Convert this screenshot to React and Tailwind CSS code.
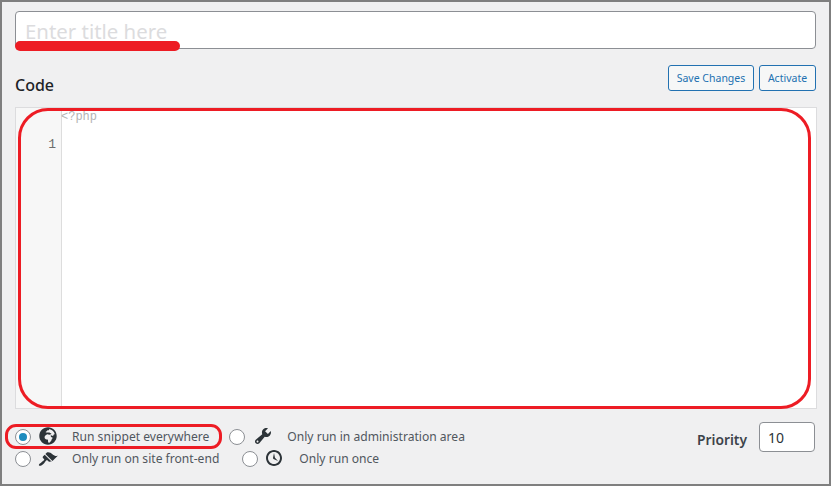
import React from 'react';
import { FaGlobeAfrica } from 'react-icons/fa';

const Radio = ({ checked }) => (
    <span className="w-4 h-4 rounded-full border border-[#8c8f94] bg-white flex items-center justify-center shrink-0">
        {checked && <span className="w-2 h-2 rounded-full bg-[#1e8cbe]" />}
    </span>
);

const WrenchIcon = () => (
    <svg viewBox="0 0 20 20" className="w-5 h-5 -mt-0.5 text-[#2c3338]" fill="currentColor">
        <path d="M16.68 9.77c-1.34 1.34-3.3 1.67-4.95.99l-5.41 6.52c-.99.99-2.59.99-3.58 0s-.99-2.59 0-3.57l6.52-5.42c-.68-1.65-.35-3.61.99-4.95 1.28-1.28 3.12-1.62 4.72-1.06l-2.89 2.89 2.82 2.82 2.86-2.87c.53 1.58.18 3.39-1.08 4.65zM3.81 16.21c.4.39 1.04.39 1.43 0 .4-.4.4-1.04 0-1.43-.39-.4-1.03-.4-1.43 0-.39.39-.39 1.03 0 1.43z" />
    </svg>
);

const BrushIcon = () => (
    <svg viewBox="0 0 20 20" className="w-5 h-5 -mt-0.5 text-[#2c3338]" fill="currentColor">
        <path d="M14.48 11.06L7.41 3.99l1.5-1.5c.5-.56 2.3-.47 3.51.32 1.21.8 1.43 1.28 2.91 2.1 1.18.64 2.45 1.26 4.45.85zm-.71.71L6.7 4.7 4.93 6.47c-.39.39-.39 1.02 0 1.41l1.06 1.06c.39.39.39 1.03 0 1.42-.6.6-1.43 1.11-2.21 1.69-.35.26-.7.53-1.01.84C1.43 13.23.4 14.89 1.02 15.5c.17.17.44.28.72.29 1.2.04 2.8-.93 3.92-2.07.31-.31.58-.66.84-1.01.58-.78 1.09-1.61 1.69-2.21.39-.39 1.03-.39 1.42 0l1.06 1.06c.39.39 1.02.39 1.41 0z" transform="translate(0 2)" />
    </svg>
);

const ClockIcon = () => (
    <svg viewBox="0 0 20 20" className="w-5 h-5 -mt-0.5 text-[#2c3338]" fill="currentColor">
        <path d="M10 2c4.42 0 8 3.58 8 8s-3.58 8-8 8-8-3.58-8-8 3.58-8 8-8zm0 14c3.31 0 6-2.69 6-6s-2.69-6-6-6-6 2.69-6 6 2.69 6 6 6zm-.71-5.29c.07.05.14.1.23.15l-.02.02L14 13l-3.03-3.19L10 5l-.97 4.81h.01c0 .02-.01.05-.02.09S9 9.97 9 10c0 .28.1.52.29.71z" />
    </svg>
);

const App = () => {
    return (
        <div className="relative w-[831px] h-[486px] bg-[#f0f0f1] border-2 border-[#7f7f7f] pt-[9px] px-[13px] font-['Noto_Sans',sans-serif] text-[#50575e] overflow-hidden">
            {/* Title */}
            <div className="h-[38px] bg-white border border-[#8c8f94] rounded px-[9px] pt-[3px] flex items-center text-[20.4px] text-[#dcdcde] leading-none">
                Enter title here
            </div>

            {/* Code header */}
            <div className="flex justify-between mt-4 h-[42px]">
                <h2 className="text-[16px] leading-[20px] font-medium text-[#1d2327] mt-[10px]">Code</h2>
                <div className="flex gap-[5px] text-[10.5px] text-[#2271b1]">
                    <button className="w-[86px] h-[26px] pt-px border border-[#2271b1] bg-[#f6f7f7] rounded-[3px] whitespace-nowrap">Save Changes</button>
                    <button className="w-[57px] h-[26px] pt-px border border-[#2271b1] bg-[#f6f7f7] rounded-[3px]">Activate</button>
                </div>
            </div>

            {/* Editor */}
            <div className="h-[302px] bg-white border border-[#dcdcde] flex mr-[-1px]">
                <div className="w-[46px] bg-[#f7f7f7] border-r border-[#dddddd] pt-[28px] pr-[5px] text-right text-[13px] leading-[18px] text-[#6d6d6d] font-['Liberation_Mono',monospace]">1</div>
                <div className="pt-0.5 -ml-px text-[12px] leading-[14px] text-[#b4b4b4] font-['Liberation_Mono',monospace]">&lt;?php</div>
            </div>

            {/* Scope and priority */}
            <div className="flex justify-between mt-[13px] text-[12.1px]">
                <div className="flex flex-col gap-[6px] pt-[7px]">
                    <div className="flex items-center h-4">
                        <Radio checked />
                        <span className="w-[18px] ml-2 -mt-0.5 text-[#2c3338] text-[18px]"><FaGlobeAfrica /></span>
                        <span className="ml-[15px]">Run snippet everywhere</span>
                        <span className="ml-5"><Radio /></span>
                        <span className="ml-2"><WrenchIcon /></span>
                        <span className="ml-[14px]">Only run in administration area</span>
                    </div>
                    <div className="flex items-center h-4">
                        <Radio />
                        <span className="ml-[7px]"><BrushIcon /></span>
                        <span className="ml-[14px]">Only run on site front-end</span>
                        <span className="ml-[23px]"><Radio /></span>
                        <span className="ml-[6px]"><ClockIcon /></span>
                        <span className="ml-[15px]">Only run once</span>
                    </div>
                </div>
                <div className="flex gap-3 h-[30px] mr-px">
                    <span className="text-[13.8px] leading-[20px] font-semibold text-[#3c434a] mt-2">Priority</span>
                    <div className="w-14 h-[30px] bg-white border border-[#8c8f94] rounded px-2 flex items-center text-[14px] text-[#2c3338]">10</div>
                </div>
            </div>

            {/* Red annotations */}
            <div className="absolute left-[13px] top-[39px] w-[165px] h-[10px] rounded-[5px] bg-[#ed1c24]" />
            <div className="absolute left-4 top-[106px] w-[793px] h-[301px] rounded-[30px] border-[3px] border-[#ed1c24]" />
            <div className="absolute left-[3px] top-[422px] w-[217px] h-[25px] rounded-[11px] border-[3px] border-[#ed1c24]" />
        </div>
    );
};

export default App;
